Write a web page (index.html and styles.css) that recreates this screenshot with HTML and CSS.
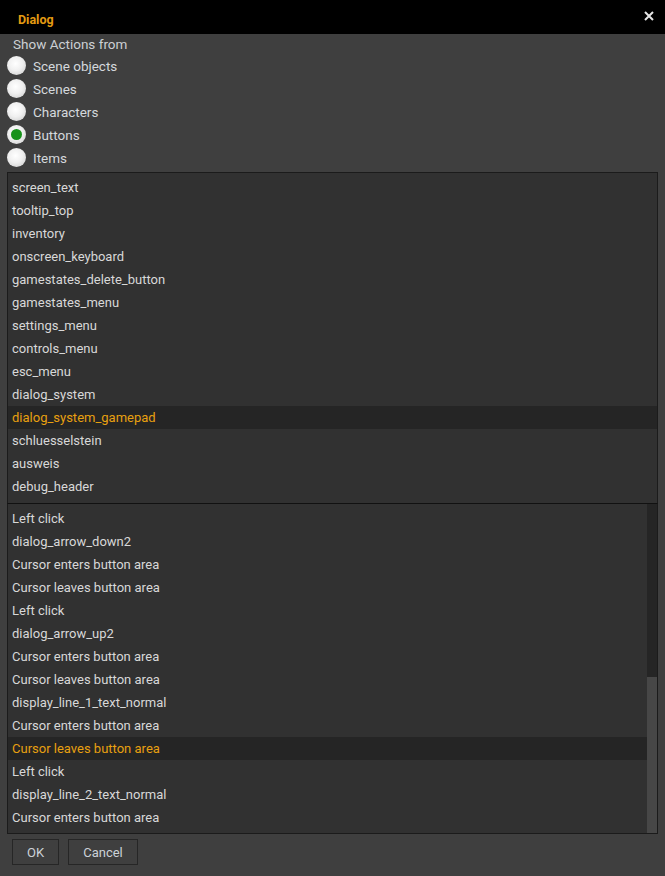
FILE: index.html
```html
<!DOCTYPE html>
<html>
<head>
<meta charset="utf-8">
<link rel="stylesheet" href="styles.css">
</head>
<body>
<div class="window">
  <div class="titlebar">
    <span class="title">Dialog</span>
    <svg class="close" width="10" height="10" viewBox="0 0 10 10"><path d="M1 1L9 9M9 1L1 9" stroke="#e6e6e6" stroke-width="2"/></svg>
  </div>
  <div class="body">
    <div class="label">Show Actions from</div>
    <div class="radios">
      <div class="radio"><span class="dot"></span><span>Scene objects</span></div>
      <div class="radio"><span class="dot"></span><span>Scenes</span></div>
      <div class="radio"><span class="dot"></span><span>Characters</span></div>
      <div class="radio"><span class="dot on"></span><span>Buttons</span></div>
      <div class="radio"><span class="dot"></span><span>Items</span></div>
    </div>
    <div class="list list1">
      <div class="item">screen_text</div>
      <div class="item">tooltip_top</div>
      <div class="item">inventory</div>
      <div class="item">onscreen_keyboard</div>
      <div class="item">gamestates_delete_button</div>
      <div class="item">gamestates_menu</div>
      <div class="item">settings_menu</div>
      <div class="item">controls_menu</div>
      <div class="item">esc_menu</div>
      <div class="item">dialog_system</div>
      <div class="item sel">dialog_system_gamepad</div>
      <div class="item">schluesselstein</div>
      <div class="item">ausweis</div>
      <div class="item">debug_header</div>
    </div>
    <div class="list list2">
      <div class="items">
        <div class="item">Left click</div>
        <div class="item">dialog_arrow_down2</div>
        <div class="item">Cursor enters button area</div>
        <div class="item">Cursor leaves button area</div>
        <div class="item">Left click</div>
        <div class="item">dialog_arrow_up2</div>
        <div class="item">Cursor enters button area</div>
        <div class="item">Cursor leaves button area</div>
        <div class="item">display_line_1_text_normal</div>
        <div class="item">Cursor enters button area</div>
        <div class="item sel">Cursor leaves button area</div>
        <div class="item">Left click</div>
        <div class="item">display_line_2_text_normal</div>
        <div class="item">Cursor enters button area</div>
      </div>
      <div class="scrollbar"><div class="thumb"></div></div>
    </div>
    <div class="buttons">
      <div class="btn ok">OK</div>
      <div class="btn cancel">Cancel</div>
    </div>
  </div>
</div>
</body>
</html>
```
FILE: styles.css
```css
html, body {
  margin: 0;
  padding: 0;
  background: #3f3f3f;
}
body {
  font-family: Roboto, "DejaVu Sans", sans-serif;
  font-size: 13px;
  color: #d8d8d8;
  width: 665px;
  height: 876px;
  overflow: hidden;
}
.window {
  display: flex;
  flex-direction: column;
  height: 876px;
}
.titlebar {
  height: 34px;
  background: #000;
  display: flex;
  align-items: center;
  justify-content: space-between;
  padding: 0 11px 0 18px;
  box-sizing: border-box;
}
.title {
  color: #e49b12;
  font-size: 12.5px;
  font-weight: bold;
  margin-top: 5px;
}
.close {
  display: block;
  margin-top: -3px;
}
.body {
  padding: 2px 7px 0 7px;
  display: flex;
  flex-direction: column;
}
.label {
  height: 17px;
  line-height: 17px;
  padding-left: 6px;
  color: #ccd0d4;
  font-size: 13.5px;
}
.radios {
  display: flex;
  flex-direction: column;
  margin-top: 1px;
}
.radio {
  height: 23px;
  display: flex;
  align-items: center;
  gap: 7px;
  font-size: 13.5px;
  color: #d4d8dc;
}
.dot {
  width: 19px;
  height: 19px;
  border-radius: 50%;
  background: radial-gradient(circle at 45% 40%, #ffffff 0%, #f0f0f0 45%, #c8c8c8 100%);
  display: flex;
  align-items: center;
  justify-content: center;
}
.dot.on::after {
  content: "";
  width: 11px;
  height: 11px;
  border-radius: 50%;
  background: #17921a;
}
.list {
  background: #313131;
  border: 1px solid #1b1b1b;
}
.list1 {
  margin-top: 3px;
  padding: 3px 0 5px 0;
  border-bottom: none;
}
.list2 {
  display: flex;
  height: 331px;
  box-sizing: border-box;
  border-top: 1px solid #111;
}
.items {
  flex: 1;
  padding-top: 3px;
  overflow: hidden;
}
.item {
  height: 23px;
  line-height: 23px;
  padding-left: 4px;
  white-space: nowrap;
}
.item.sel {
  background: #252525;
  color: #e8a010;
}
.scrollbar {
  width: 10px;
  background: #252525;
  display: flex;
  flex-direction: column;
  justify-content: flex-end;
}
.thumb {
  height: 156px;
  background: #474747;
}
.buttons {
  display: flex;
  gap: 9px;
  padding: 5px 0 0 5px;
}
.btn {
  height: 26px;
  box-sizing: border-box;
  border: 1px solid #262626;
  line-height: 26px;
  text-align: center;
  color: #ccd2d8;
}
.ok { width: 47px; }
.cancel { width: 70px; }
```
